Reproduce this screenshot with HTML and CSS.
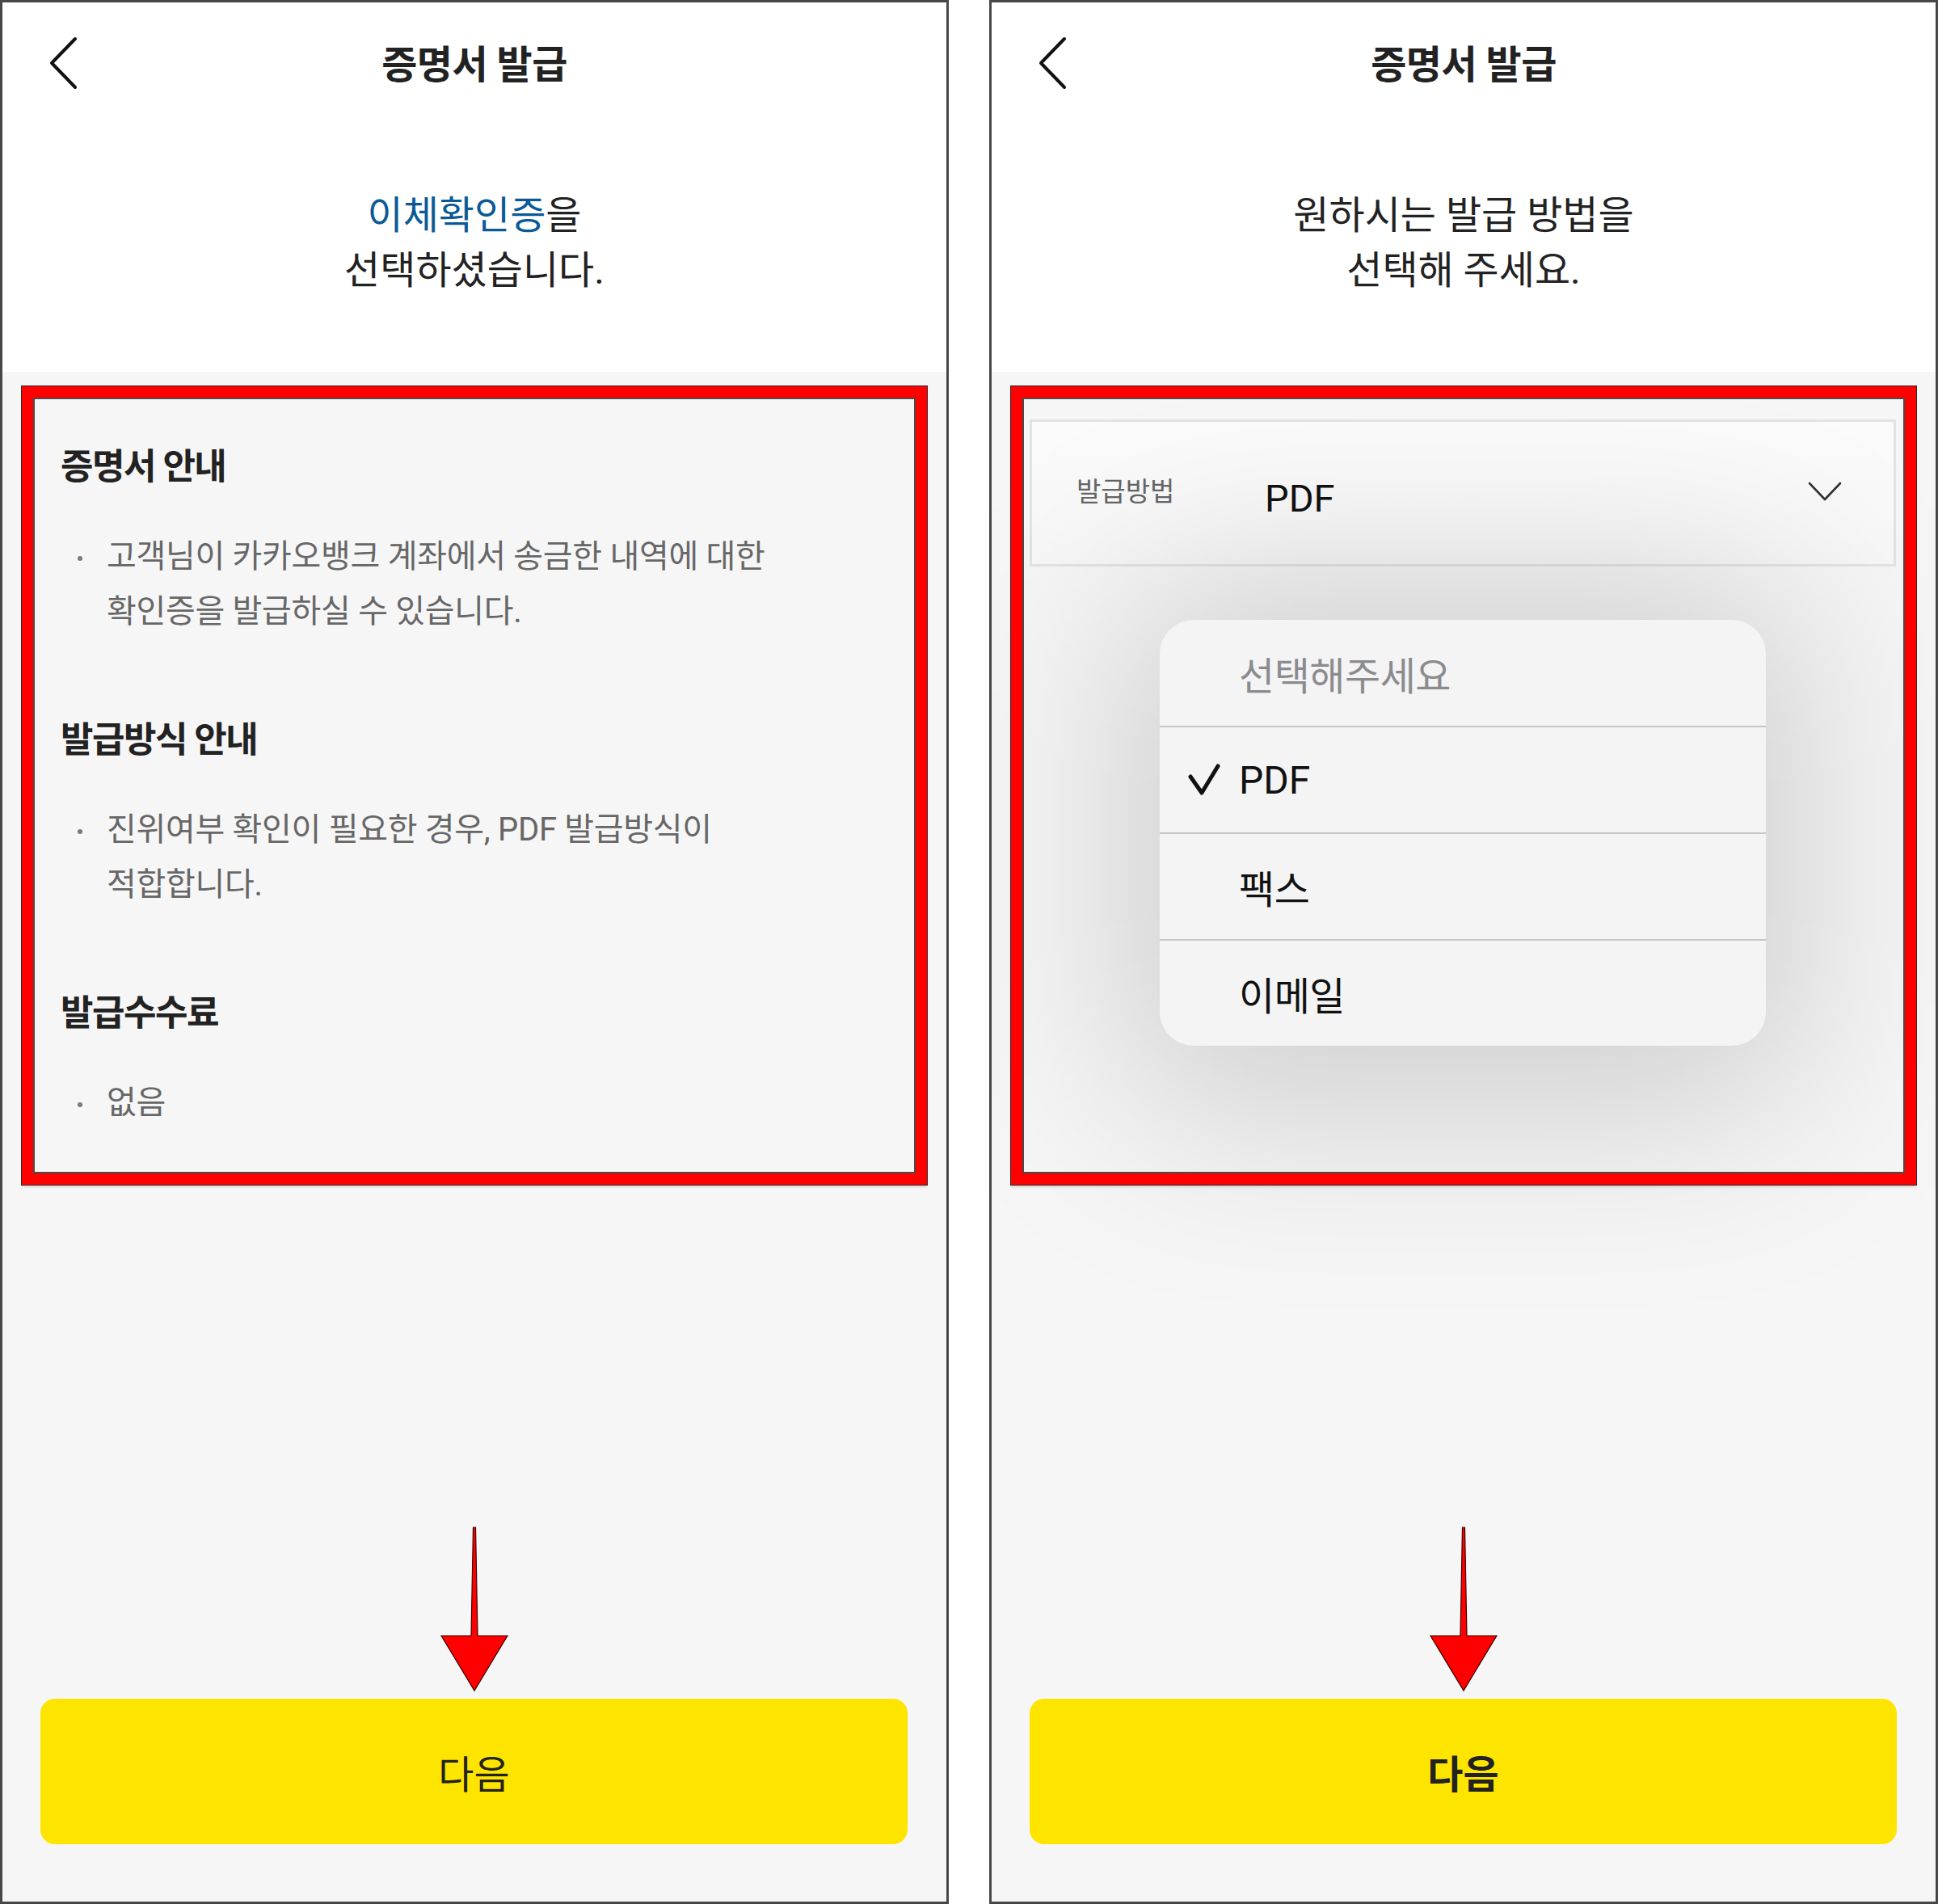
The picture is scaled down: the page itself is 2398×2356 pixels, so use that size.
FILE: index.html
```html
<!DOCTYPE html>
<html lang="ko">
<head>
<meta charset="utf-8">
<title>증명서 발급</title>
<link rel="stylesheet" href="styles.css">
</head>
<body>
<div class="screens">
  <section class="phone">
    <header class="top">
      <nav class="nav">
        <span class="back"><svg width="40" height="68" viewBox="0 0 40 68"><path d="M34 4 L5 34 L34 64" fill="none" stroke="#111" stroke-width="4" stroke-linecap="round" stroke-linejoin="round"/></svg></span>
        <h1 class="title">증명서 발급</h1>
        <span></span>
      </nav>
      <p class="lead"><span class="hl">이체확인증</span>을<br>선택하셨습니다.</p>
    </header>
    <div class="content">
      <div class="frame frame-info">
        <section class="sec">
          <h2>증명서 안내</h2>
          <ul><li><span>고객님이 카카오뱅크 계좌에서 송금한 내역에 대한<br>확인증을 발급하실 수 있습니다.</span></li></ul>
        </section>
        <section class="sec">
          <h2>발급방식 안내</h2>
          <ul><li><span>진위여부 확인이 필요한 경우, PDF 발급방식이<br>적합합니다.</span></li></ul>
        </section>
        <section class="sec">
          <h2>발급수수료</h2>
          <ul><li><span>없음</span></li></ul>
        </section>
      </div>
    </div>
    <div class="actions"><button class="next">다음</button></div>
    <svg class="arrow" width="90" height="208" viewBox="0 0 90 208"><polygon points="43.5,2 46.5,2 49,136 86,136 45,204 4,136 41,136" fill="#ff0000" stroke="#3a0000" stroke-width="1.2" stroke-linejoin="miter"/></svg>
  </section>

  <section class="phone">
    <header class="top">
      <nav class="nav">
        <span class="back"><svg width="40" height="68" viewBox="0 0 40 68"><path d="M34 4 L5 34 L34 64" fill="none" stroke="#111" stroke-width="4" stroke-linecap="round" stroke-linejoin="round"/></svg></span>
        <h1 class="title">증명서 발급</h1>
        <span></span>
      </nav>
      <p class="lead">원하시는 발급 방법을<br>선택해 주세요.</p>
    </header>
    <div class="content">
      <div class="frame frame-select">
        <div class="field">
          <span class="field-label">발급방법</span>
          <span class="field-value">PDF</span>
          <span class="field-caret"><svg width="44" height="28" viewBox="0 0 44 28"><path d="M3 4 L22 24 L41 4" fill="none" stroke="#333" stroke-width="2.6" stroke-linecap="round" stroke-linejoin="round"/></svg></span>
        </div>
        <div class="menu-wrap">
          <div class="menu-shadow"></div>
          <div class="menu">
            <div class="opt placeholder"><span class="mark"></span>선택해주세요</div>
            <div class="opt"><span class="mark"><svg width="40" height="40" viewBox="0 0 40 40"><path d="M3 16 L17 36 L37 3" fill="none" stroke="#111" stroke-width="5" stroke-linecap="round" stroke-linejoin="round"/></svg></span><span class="latin">PDF</span></div>
            <div class="opt"><span class="mark"></span>팩스</div>
            <div class="opt"><span class="mark"></span>이메일</div>
          </div>
        </div>
      </div>
    </div>
    <div class="actions"><button class="next bold">다음</button></div>
    <svg class="arrow" width="90" height="208" viewBox="0 0 90 208"><polygon points="43.5,2 46.5,2 49,136 86,136 45,204 4,136 41,136" fill="#ff0000" stroke="#3a0000" stroke-width="1.2" stroke-linejoin="miter"/></svg>
  </section>
</div>
</body>
</html>
```

FILE: styles.css
```css
* { box-sizing: border-box; }

body {
  margin: 0;
  background: #ffffff;
  font-family: Roboto, "Noto Sans CJK KR", sans-serif;
}

.screens {
  display: flex;
  gap: 50px;
  width: 2398px;
  height: 2356px;
}

.phone {
  position: relative;
  width: 1174px;
  height: 2356px;
  border: 3px solid #474747;
  background: #f6f6f6;
  display: flex;
  flex-direction: column;
  overflow: hidden;
}

.top {
  flex: none;
  height: 457px;
  background: #ffffff;
}

.nav {
  height: 150px;
  display: grid;
  grid-template-columns: 1fr auto 1fr;
  align-items: center;
}

.back {
  justify-self: start;
  margin-left: 56px;
  display: flex;
}

.title {
  margin: 0;
  padding-top: 6px;
  font-size: 48px;
  line-height: 1;
  font-weight: 700;
  letter-spacing: -0.5px;
  color: #222222;
}

.lead {
  margin: 80px 0 0;
  text-align: center;
  font-size: 48px;
  line-height: 68px;
  letter-spacing: 0;
  color: #222222;
}

.hl { color: #0b5a96; }

.content {
  flex: none;
  padding: 18px 0 0 24px;
}

.frame {
  position: relative;
  width: 1120px;
  height: 988px;
}

.frame::after {
  content: "";
  position: absolute;
  inset: 0;
  border: 14px solid #ff0000;
  box-shadow: 0 0 0 1px #2a2a2a, inset 0 0 0 2px #4a4a4a, 0 3px 3px rgba(0, 0, 0, 0.12);
  z-index: 3;
  pointer-events: none;
}

.frame-info {
  padding: 70px 30px 0 48px;
}

.sec h2 {
  margin: 0 0 47px;
  font-size: 44px;
  line-height: 60px;
  font-weight: 700;
  letter-spacing: -1.5px;
  color: #222222;
}

.sec + .sec { margin-top: 95px; }

.sec ul {
  margin: 0;
  padding: 0;
  list-style: none;
}

.sec li {
  display: flex;
  font-size: 40px;
  line-height: 68px;
  letter-spacing: -0.3px;
  color: #676767;
  white-space: nowrap;
}

.sec li::before {
  content: "";
  flex: none;
  width: 6px;
  height: 6px;
  border-radius: 50%;
  background: #7a7a7a;
  margin: 33px 30px 0 21px;
}

.frame-select {
  padding: 41px 25px 0 23px;
}

.field {
  height: 182px;
  border: 3px solid #e3e3e3;
  background: linear-gradient(#fbfbfb, #f7f7f7);
  display: flex;
  align-items: center;
  padding-left: 55px;
}

.field-label {
  flex: none;
  width: 233px;
  font-size: 33px;
  letter-spacing: 0;
  color: #666666;
  margin-bottom: 8px;
}

.field-value {
  font-family: Roboto, sans-serif;
  font-size: 47px;
  color: #111111;
  margin-top: 12px;
}

.field-caret {
  display: flex;
  margin-left: auto;
  margin-right: 63px;
  margin-bottom: 4px;
}

.menu-wrap {
  position: relative;
  width: 750px;
  margin: 66px auto 0;
}

.menu-shadow {
  position: absolute;
  inset: -40px -40px -80px -40px;
  border-radius: 80px;
  background: rgba(0, 0, 0, 0.16);
  filter: blur(120px);
}

.menu {
  position: relative;
  background: #f4f4f4;
  border-radius: 42px;
  overflow: hidden;
}

.opt {
  height: 131px;
  display: flex;
  align-items: center;
  padding-left: 35px;
  font-size: 48px;
  letter-spacing: -0.5px;
  color: #111111;
}

.opt + .opt {
  height: 132px;
  border-top: 2px solid #c6c6c6;
}

.opt.placeholder { color: #8b8b8f; }

.mark {
  flex: none;
  width: 63px;
  display: flex;
}

.latin {
  font-family: Roboto, sans-serif;
  font-size: 48px;
  letter-spacing: 0;
}

.actions {
  margin-top: auto;
  padding: 0 48px 71px 47px;
}

.next {
  display: block;
  width: 100%;
  height: 180px;
  border: 0;
  border-radius: 18px;
  background: #fee500;
  font-family: Roboto, "Noto Sans CJK KR", sans-serif;
  font-size: 48px;
  letter-spacing: 0;
  color: #222222;
}

.next.bold { font-weight: 700; }

.arrow {
  position: absolute;
  left: 539px;
  top: 1885px;
  z-index: 4;
}
```
